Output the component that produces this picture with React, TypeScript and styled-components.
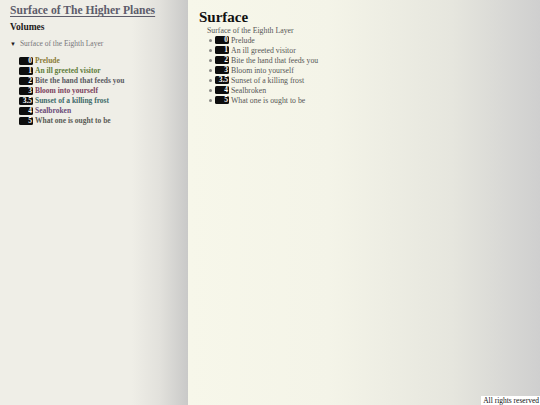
import styled, { createGlobalStyle } from 'styled-components';

const GlobalStyle = createGlobalStyle`
  html, body {
    margin: 0;
    padding: 0;
    height: 100%;
  }
  body {
    font-family: "Liberation Serif", "DejaVu Serif", serif;
    background: #f7f7ea;
  }
  #root {
    height: 100%;
  }
`;

const Page = styled.div`
  display: flex;
  height: 405px;
  width: 540px;
  overflow: hidden;
  position: relative;
`;

const Sidebar = styled.nav`
  width: 188px;
  flex-shrink: 0;
  padding: 3px 0 0 10px;
  box-sizing: border-box;
  background: linear-gradient(to right, #efeee7 0%, #efeee7 70%, #e2e1dc 85%, #c9c9c8 100%);
`;

const SiteTitle = styled.h1`
  margin: 0;
  font-size: 11.6px;
  font-weight: 700;
  color: #5d5c6b;
  text-decoration: underline;
  text-decoration-thickness: 1px;
  text-underline-offset: 2px;
  line-height: 15px;
`;

const SectionTitle = styled.h2`
  margin: 3px 0 0;
  font-size: 9.5px;
  font-weight: 700;
  color: #1e1a1a;
  line-height: 12px;
`;

const VolumeToggle = styled.div`
  margin-top: 6px;
  font-size: 7.5px;
  color: #77767a;
  display: flex;
  align-items: center;
  gap: 4px;
  line-height: 10px;
`;

const Caret = styled.span`
  font-size: 6px;
  color: #1e1a1a;
`;

const ChapterList = styled.ul`
  list-style: none;
  margin: 7px 0 0;
  padding: 0 0 0 9px;
`;

const ChapterRow = styled.li`
  display: flex;
  align-items: center;
  gap: 2px;
  height: 10px;
  font-size: 7.5px;
  font-weight: 700;
`;

const Badge = styled.span`
  display: inline-block;
  width: 14px;
  height: 8px;
  box-sizing: border-box;
  background: #0e0e0e;
  color: #fff;
  border-radius: 1.5px;
  font-size: 7.5px;
  font-weight: 700;
  line-height: 8px;
  text-align: right;
  padding-right: 1px;
`;

const ChapterName = styled.span<{ tint: string }>`
  color: ${p => p.tint};
  line-height: 10px;
`;

const Main = styled.main`
  flex: 1;
  padding: 8px 0 0 11px;
  background: linear-gradient(to right, #f7f7ea 0%, #f4f4e8 40%, #e6e6de 75%, #cfcfcf 100%);
`;

const PageTitle = styled.h1`
  margin: 0;
  font-size: 15px;
  font-weight: 700;
  color: #111;
  line-height: 18px;
`;

const VolumeLabel = styled.div`
  margin: 0 0 0 8px;
  font-size: 7.8px;
  color: #555;
  line-height: 9px;
`;

const BulletList = styled.ul`
  margin: 0;
  padding: 0 0 0 16px;
  list-style: none;
`;

const BulletRow = styled.li`
  display: flex;
  align-items: center;
  gap: 2px;
  height: 10px;
  font-size: 7.8px;
  color: #555;
  position: relative;

  &::before {
    content: '';
    position: absolute;
    left: -6px;
    top: 4px;
    width: 3px;
    height: 3px;
    border-radius: 50%;
    background: #8a8a86;
  }
`;

const Footer = styled.footer`
  position: absolute;
  right: 0;
  bottom: 0;
  background: #fff;
  color: #111;
  font-size: 7.5px;
  line-height: 9px;
  padding: 0 1px 0 2px;
`;

const chapters = [
  { num: '0', name: 'Prelude', tint: '#8a7a35' },
  { num: '1', name: 'An ill greeted visitor', tint: '#5f7d3a' },
  { num: '2', name: 'Bite the hand that feeds you', tint: '#5a5a62' },
  { num: '3', name: 'Bloom into yourself', tint: '#7a3f5c' },
  { num: '3.5', name: 'Sunset of a killing frost', tint: '#3f6b6a' },
  { num: '4', name: 'Sealbroken', tint: '#6a4a78' },
  { num: '5', name: 'What one is ought to be', tint: '#5a5a55' },
];

export default function App() {
  return (
    <>
      <GlobalStyle />
      <Page>
        <Sidebar>
          <SiteTitle>Surface of The Higher Planes</SiteTitle>
          <SectionTitle>Volumes</SectionTitle>
          <VolumeToggle>
            <Caret>▼</Caret> Surface of the Eighth Layer
          </VolumeToggle>
          <ChapterList>
            {chapters.map(c => (
              <ChapterRow key={c.num}>
                <Badge>{c.num}</Badge>
                <ChapterName tint={c.tint}>{c.name}</ChapterName>
              </ChapterRow>
            ))}
          </ChapterList>
        </Sidebar>
        <Main>
          <PageTitle>Surface</PageTitle>
          <VolumeLabel>Surface of the Eighth Layer</VolumeLabel>
          <BulletList>
            {chapters.map(c => (
              <BulletRow key={c.num}>
                <Badge>{c.num}</Badge>
                <span>{c.name}</span>
              </BulletRow>
            ))}
          </BulletList>
        </Main>
        <Footer>All rights reserved</Footer>
      </Page>
    </>
  );
}
